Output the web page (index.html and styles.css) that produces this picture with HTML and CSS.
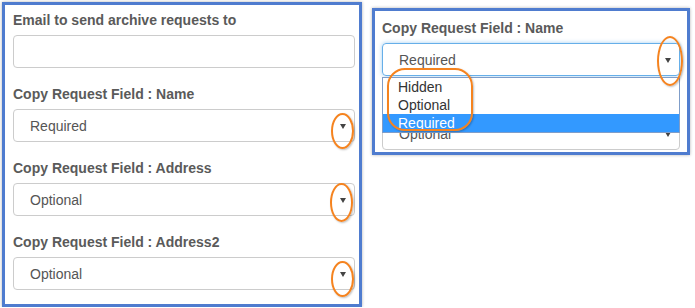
FILE: index.html
```html
<!DOCTYPE html>
<html lang="en">
<head>
  <meta charset="UTF-8">
  <title>Archive settings</title>
  <link rel="stylesheet" href="styles.css">
</head>
<body>

  <div class="page">

    <!-- full settings form -->
    <div class="panel panel-main">
      <div class="field">
        <label class="field-label">Email to send archive requests to</label>
        <div class="text-box"></div>
      </div>

      <div class="field">
        <label class="field-label">Copy Request Field : Name</label>
        <div class="select-box">
          <span>Required</span>
          <span class="arrow"></span>
          <div class="ring ring-arrow"></div>
        </div>
      </div>

      <div class="field">
        <label class="field-label">Copy Request Field : Address</label>
        <div class="select-box">
          <span>Optional</span>
          <span class="arrow"></span>
          <div class="ring ring-arrow ring-tall"></div>
        </div>
      </div>

      <div class="field">
        <label class="field-label">Copy Request Field : Address2</label>
        <div class="select-box">
          <span>Optional</span>
          <span class="arrow"></span>
          <div class="ring ring-arrow"></div>
        </div>
      </div>
    </div>

    <!-- same select, opened -->
    <div class="panel panel-open">
      <div class="field">
        <label class="field-label">Copy Request Field : Name</label>
        <div class="select-box focused">
          <span>Required</span>
          <span class="arrow"></span>
          <div class="ring ring-arrow-big"></div>
          <ul class="options">
            <li>Hidden</li>
            <li>Optional</li>
            <li class="picked">Required</li>
            <div class="ring ring-options"></div>
          </ul>
        </div>
      </div>

      <div class="field">
        <label class="field-label">Copy Request Field : Address</label>
        <div class="select-box">
          <span>Optional</span>
          <span class="arrow"></span>
        </div>
      </div>
    </div>

  </div>

</body>
</html>
```

FILE: styles.css
```css
body {
  margin: 0;
  padding: 0;
  font-family: "Liberation Sans", Arial, sans-serif;
  background: #fff;
  color: #555;
}

.page {
  display: flex;
  align-items: flex-start;
  padding: 2px 0 0 2px;
  gap: 10px;
}

.panel {
  border: 3px solid #4f7ccf;
  background: #fff;
  box-shadow: 0 0 3px rgba(0, 0, 0, 0.3);
  box-sizing: border-box;
}

.panel-main {
  width: 360px;
  height: 305px;
  padding: 6px 4px 0 8px;
}

.panel-open {
  width: 318px;
  height: 147px;
  margin-top: 6px;
  padding: 8px 7px 0 7px;
  overflow: hidden;
}

.field {
  margin-bottom: 17px;
}

.field-label {
  display: block;
  font-size: 14px;
  font-weight: bold;
  line-height: 18px;
  margin-bottom: 6px;
  color: #5a5a5a;
}

.text-box,
.select-box {
  height: 33px;
  border: 1px solid #ccc;
  border-radius: 4px;
  box-sizing: border-box;
}

.select-box {
  position: relative;
  display: flex;
  align-items: center;
  justify-content: space-between;
  padding: 0 8px 0 16px;
  font-size: 14px;
  color: #555;
}

.select-box.focused {
  border-color: #66afe9;
  box-shadow: 0 0 4px rgba(102, 175, 233, 0.6);
}

.arrow {
  width: 0;
  height: 0;
  border-left: 3px solid transparent;
  border-right: 3px solid transparent;
  border-top: 5px solid #444;
  margin-top: 1px;
}

/* dropdown list */
.options {
  position: absolute;
  top: 33px;
  left: -1px;
  right: -1px;
  margin: 0;
  padding: 0;
  list-style: none;
  background: #fff;
  border: 1px solid #7f9dc9;
  z-index: 5;
}

.options li {
  height: 18px;
  line-height: 18px;
  padding-left: 15px;
  font-size: 14px;
  color: #333;
}

.options li.picked {
  background: #3399ff;
  color: #fff;
}

/* orange annotation marks */
.ring {
  position: absolute;
  border: 2px solid #f5831f;
  box-shadow: 1px 1px 2px rgba(0, 0, 0, 0.25);
  box-sizing: border-box;
  z-index: 6;
}

.ring-arrow {
  right: 0;
  top: 3px;
  width: 23px;
  height: 36px;
  border-radius: 50%;
}

.ring-tall {
  top: -1px;
  right: 1px;
  height: 39px;
}

.ring-arrow-big {
  right: -4px;
  top: -8px;
  width: 26px;
  height: 50px;
  border-radius: 50%;
}

.ring-options {
  left: 4px;
  top: -10px;
  width: 86px;
  height: 63px;
  border-radius: 18px;
}
```
